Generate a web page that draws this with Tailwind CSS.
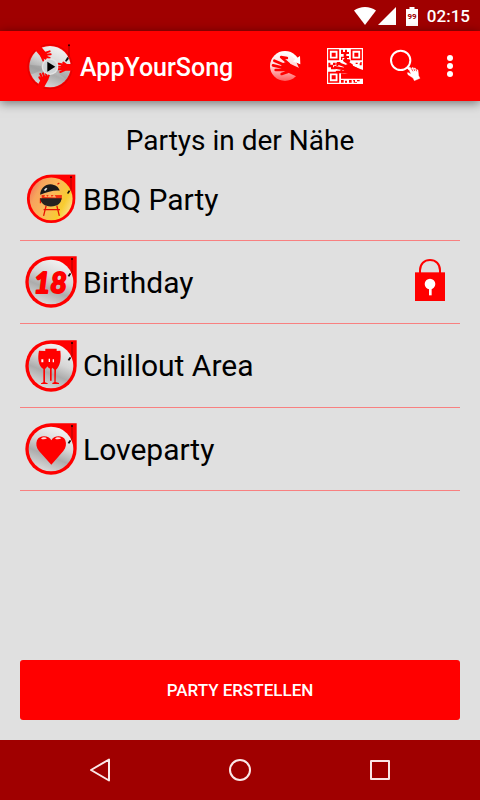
<!DOCTYPE html>
<html lang="de">

<head>
    <meta charset="UTF-8">
    <meta name="viewport" content="width=device-width, initial-scale=1.0">
    <title>AppYourSong</title>
    <script src="https://cdn.jsdelivr.net/npm/@tailwindcss/browser@4"></script>
</head>

<body class="min-h-screen flex flex-col bg-[#e0e0e0] text-black font-['Roboto',sans-serif]">

    <!-- Shared shapes -->
    <svg class="absolute w-0 h-0" aria-hidden="true">
        <defs>
            <linearGradient id="silver" x1="0.7" y1="0" x2="0.3" y2="1">
                <stop offset="0" stop-color="#f4f4f4" />
                <stop offset="0.4" stop-color="#d6d6d6" />
                <stop offset="0.65" stop-color="#acacac" />
                <stop offset="1" stop-color="#dedede" />
            </linearGradient>
            <linearGradient id="fire" x1="0" y1="0.2" x2="1" y2="0.7">
                <stop offset="0" stop-color="#f0705a" />
                <stop offset="0.2" stop-color="#f7a45c" />
                <stop offset="0.5" stop-color="#fbb85a" />
                <stop offset="0.8" stop-color="#f8cc30" />
                <stop offset="1" stop-color="#fbe08a" />
            </linearGradient>
            <linearGradient id="fade" x1="0" y1="0" x2="0" y2="1">
                <stop offset="0" stop-color="#ffffff" />
                <stop offset="0.5" stop-color="#ffd8d8" />
                <stop offset="1" stop-color="#ff5a5a" />
            </linearGradient>
        </defs>
        <symbol id="pin" viewBox="0 0 156 156">
            <path d="M78 1H155V78A77 77 0 1 1 78 1Z" fill="#ff0000" />
        </symbol>
        <symbol id="tonearm" viewBox="0 0 156 156">
            <path d="M141 8V48L132 60" fill="none" stroke="#800000" stroke-width="2" />
            <circle cx="141" cy="9" r="3" fill="#200000" />
            <path d="M128 60L134 51L138 54L133 62Z" fill="#111" />
        </symbol>
    </svg>

    <!-- Status bar -->
    <div class="h-[31px] shrink-0 bg-[#a00000] text-white flex items-center justify-end pt-px pr-[10px]">
        <svg class="w-[22px] h-[18px] mr-[2px]" viewBox="0 0 22 18" fill="#fff">
            <path d="M0 3.6C6-1.2 16-1.2 22 3.6L11 18Z" />
        </svg>
        <svg class="w-[18px] h-[18px] mr-[10px]" viewBox="0 0 18 18" fill="#fff">
            <path d="M18 0V18H0Z" />
        </svg>
        <svg class="w-3 h-[19px] mr-[9px]" viewBox="0 0 12 19">
            <path d="M3.5 0H8.5V2H12V19H0V2H3.5Z" fill="#fff" />
            <text x="6" y="12" text-anchor="middle" font-family="Roboto" font-size="8" font-weight="700" fill="#a00000">99</text>
        </svg>
        <span class="text-[17px] leading-6 font-medium">02:15</span>
    </div>

    <!-- App bar -->
    <header class="h-[70px] shrink-0 bg-[#ff0000] text-white flex items-center pl-[26px] pr-[15px] shadow-[0_2px_10px_rgba(0,0,0,0.5)]">
        <svg class="w-12 h-12 mr-[6px] shrink-0" viewBox="0 0 144 144">
            <circle cx="72" cy="74" r="66" fill="#ff0000" stroke="#e40000" stroke-width="4" />
            <circle cx="72" cy="74" r="62" fill="url(#silver)" />
            <path d="M72 74L10 68A62 62 0 0 0 14 98Z" fill="#8c8c8c" opacity="0.4" />
            <path d="M72 74L120 112A62 62 0 0 0 133 84Z" fill="#8c8c8c" opacity="0.3" />
            <!-- hands -->
            <g fill="none" stroke="#ff0000" stroke-linecap="round">
                <path d="M34 16L54 40" stroke-width="20" />
                <path d="M52 34L71 28M56 38L74 37M58 43L71 48M52 44L66 57M46 42L52 56" stroke-width="6" />
                <path d="M134 76H114" stroke-width="20" />
                <path d="M114 68L98 65M112 74L96 74M112 80L98 82M116 84L103 90M120 68L112 62" stroke-width="6" />
                <path d="M46 130L56 112" stroke-width="20" />
                <path d="M50 112L43 96M56 108L51 94M62 108L60 94M64 112L69 98M48 118L40 106" stroke-width="6" />
            </g>
            <circle cx="72" cy="74" r="25" fill="#e4e4e4" />
            <circle cx="72" cy="74" r="21" fill="#cfd4d6" />
            <path d="M64 59L88 74L64 89Z" fill="#000" />
            <path d="M129 10V42L121 56" fill="none" stroke="#800000" stroke-width="2" />
            <circle cx="129" cy="10" r="3" fill="#300000" />
            <path d="M117 57L124 45L129 50L121 59Z" fill="#111" />
        </svg>
        <h1 class="flex-1 pt-1 text-[25px] leading-8 font-medium whitespace-nowrap">AppYourSong</h1>

        <button class="w-15 h-full flex items-center justify-center" aria-label="Aktualisieren">
            <svg class="w-9 h-9" viewBox="0 0 108 108">
                <circle cx="54" cy="54" r="45" fill="url(#fade)" />
                <path d="M80 25L108 60V108H92L104 78Z" fill="#ff0000" />
                <path d="M70 14C80 17 87 23 91 29L99 24L100 49L77 40L84 35C80 28 74 23 66 20Z" fill="#fff" />
                <g fill="none" stroke="#ff0000" stroke-linecap="round" stroke-linejoin="round">
                    <path d="M56 56L78 66L104 78" stroke-width="27" />
                    <path d="M54 52L22 38M52 60L18 52M56 66L26 66M62 72L44 78" stroke-width="8" />
                    <path d="M66 48L42 27L60 30" stroke-width="7" />
                </g>
            </svg>
        </button>
        <button class="w-15 h-full flex items-center justify-center" aria-label="QR-Code scannen">
            <svg class="w-9 h-9" viewBox="0 0 108 108">
                <path d="M0 0H108V108H0Z" fill="#fff" />
                <g fill="none" stroke="#ff0000" stroke-width="5">
                    <path d="M6 6H34V34H6ZM74 6H102V34H74ZM6 74H34V102H6Z" />
                </g>
                <path d="M14 14H26V26H14ZM82 14H94V26H82ZM14 82H26V94H14Z" fill="#ff0000" />
                <path d="M42 5H48V12H54V5H60V12H66V18H58V24H66V30H60V36H52V30H46V36H42V26H50V18H42ZM4 44H10V50H18V44H26V52H18V58H26V64H12V58H4ZM30 42H40V48H34V54H28V46H30ZM42 96H50V104H42ZM54 98H60V104H54ZM66 96H74V104H66ZM78 96H84V102H90V96H98V100H90V104H80V98H78ZM100 42H104V52H98V46H100ZM40 66H46V72H40ZM86 44H92V48H86Z" fill="#ff0000" />
                <path d="M42 76L78 78L108 86V92H42Z" fill="#ff0000" />
                <g fill="none" stroke="#ff0000" stroke-linecap="round" stroke-linejoin="round">
                    <path d="M64 62L84 72" stroke-width="28" />
                    <path d="M60 56L32 46M58 64L24 58M60 72L30 72M68 78L46 84M74 52L52 37L66 38" stroke-width="8" />
                </g>
                <path d="M76 54L108 66V90L72 86Z" fill="#ff0000" />
            </svg>
        </button>
        <button class="w-15 h-full flex items-center justify-center" aria-label="Suchen">
            <svg class="w-9 h-9" viewBox="0 0 108 108">
                <circle cx="41" cy="37" r="29" fill="none" stroke="#fff" stroke-width="6" />
                <path d="M61 58L68 65" stroke="#fff" stroke-width="6" />
                <path d="M64 60L69 57L76 69L73 61L78 58L81 66L80 60L85 60L88 68L88 64L93 66L95 83L99 91L82 98L78 90L63 80L61 74L65 74L72 79Z" fill="#fff" stroke="#fff" stroke-width="1" />
                <path d="M74 62L78 70M81 62L83 69M87 64L89 70" stroke="#ff0000" stroke-width="2" />
            </svg>
        </button>
        <button class="w-[30px] h-full flex flex-col items-center justify-center gap-[2px]" aria-label="Menü">
            <span class="size-[6px] rounded-full bg-white"></span>
            <span class="size-[6px] rounded-full bg-white"></span>
            <span class="size-[6px] rounded-full bg-white"></span>
        </button>
    </header>

    <!-- Party list -->
    <main class="flex-1 flex flex-col px-5 pt-6 pb-5">
        <h2 class="text-[28px] leading-8 text-center">Partys in der Nähe</h2>

        <ul class="text-[30px] leading-10">
            <li class="border-b border-[#f88080]">
                <button class="w-full h-[83px] flex items-center pl-[5px] pr-[15px] text-left">
                    <svg class="size-[52px] mr-[6px]" viewBox="-5 -4 165 165">
                        <use href="#pin" width="156" height="156" />
                        <circle cx="78" cy="78" r="68" fill="url(#fire)" />
                        <g fill="none" stroke="#e81000" stroke-width="4">
                            <path d="M44 76V92M54 112H106M62 100L54 132M96 100L104 132M98 32L104 28" />
                        </g>
                        <path d="M48 66H112V80H48Z" fill="#f03010" />
                        <path d="M56 72L60 62L66 72L74 60L80 72L88 64L94 74Z" fill="#ffb060" />
                        <path d="M43 65C44 46 58 32 76 32C92 33 102 41 105 52C86 50 66 56 43 65Z" fill="#1a1a1a" />
                        <path d="M55 50L62 43L66 46L59 53Z" fill="#e8e8e8" />
                        <path d="M43 76H111C110 92 98 102 77 102C57 102 45 92 43 76Z" fill="#262220" />
                        <use href="#tonearm" width="156" height="156" />
                    </svg>
                    <span class="flex-1 pt-[2px]">BBQ Party</span>
                </button>
            </li>
            <li class="border-b border-[#f88080]">
                <button class="w-full h-[82px] flex items-center pl-[5px] pr-[15px] text-left">
                    <svg class="size-[52px] mr-[6px]" viewBox="0 0 156 156">
                        <use href="#pin" width="156" height="156" />
                        <circle cx="78" cy="78" r="67" fill="url(#silver)" />
                        <text x="76" y="110" text-anchor="middle" font-family="Lato" font-weight="700" font-style="italic" font-size="86" fill="#ff0000" stroke="#ff0000" stroke-width="6" stroke-linejoin="round">18</text>
                        <use href="#tonearm" width="156" height="156" />
                    </svg>
                    <span class="flex-1 pt-px">Birthday</span>
                    <svg class="w-[30px] h-[42px] mb-1" viewBox="0 0 90 126" role="img" aria-label="Passwortgeschützt">
                        <path d="M15 44V34C15 14 28 3 45 3C62 3 75 14 75 34V44" fill="none" stroke="#ff0000" stroke-width="6" />
                        <path d="M0 40H90V126H0Z" fill="#ff0000" />
                        <circle cx="45" cy="75" r="16" fill="#fff" />
                        <path d="M42 86H50V109H42Z" fill="#fff" />
                    </svg>
                </button>
            </li>
            <li class="border-b border-[#f88080]">
                <button class="w-full h-[83px] flex items-center pl-[5px] pr-[15px] text-left">
                    <svg class="size-[52px] mr-[6px]" viewBox="0 0 156 156">
                        <use href="#pin" width="156" height="156" />
                        <circle cx="78" cy="78" r="67" fill="url(#silver)" />
                        <g fill="#ff0000">
                            <path d="M61 26H95V60C95 76 84 82 80 86V122H75V86C68 82 60 74 60 60Z" />
                            <path d="M42 32L75 34C76 60 72 78 60 87L60 127L68 130V132H48V130L55 127V87C40 78 37 54 42 32Z" />
                            <path d="M78 34L106 32C109 56 106 78 93 89L92 126L102 129V132H82V129L88 126L88 89C76 80 76 58 78 34Z" />
                        </g>
                        <path d="M49 58H55V67H49ZM71 56H75V66H71ZM83 58H87V67H83Z" fill="#fff" />
                        <use href="#tonearm" width="156" height="156" />
                    </svg>
                    <span class="flex-1 pt-px">Chillout Area</span>
                </button>
            </li>
            <li class="border-b border-[#f88080]">
                <button class="w-full h-[82px] flex items-center pl-[5px] pr-[15px] text-left">
                    <svg class="size-[52px] mr-[6px]" viewBox="0 0 156 156">
                        <use href="#pin" width="156" height="156" />
                        <circle cx="78" cy="78" r="67" fill="url(#silver)" />
                        <path d="M79 125L42 84C34 75 32 62 36 52C41 43 48 40 57 40C67 40 75 44 79 52C83 44 91 40 101 40C110 40 117 43 121 52C125 62 123 75 115 84Z" fill="#ff0000" />
                        <path d="M48 47C53 42 61 42 66 46C61 49 54 50 48 47ZM90 47C95 42 103 42 109 46C104 49 96 50 90 47Z" fill="#fff" opacity="0.85" />
                        <use href="#tonearm" width="156" height="156" />
                    </svg>
                    <span class="flex-1 pt-px">Loveparty</span>
                </button>
            </li>
        </ul>

        <button class="mt-auto w-full h-15 rounded-[3px] bg-[#ff0000] text-white text-[17px] leading-6 font-medium">PARTY ERSTELLEN</button>
    </main>

    <!-- Navigation bar -->
    <nav class="h-15 shrink-0 bg-[#a00000] grid grid-cols-3 px-[30px]">
        <button class="flex items-center justify-center" aria-label="Zurück">
            <svg class="size-6" viewBox="0 0 24 24" fill="none" stroke="#fbe8e8" stroke-width="2" stroke-linejoin="round">
                <path d="M3 12L21 1.500V22.500Z" />
            </svg>
        </button>
        <button class="flex items-center justify-center" aria-label="Startseite">
            <svg class="size-6" viewBox="0 0 24 24" fill="none" stroke="#fbe8e8" stroke-width="2">
                <circle cx="12" cy="12" r="10" />
            </svg>
        </button>
        <button class="flex items-center justify-center" aria-label="Übersicht">
            <svg class="size-6" viewBox="0 0 24 24" fill="none" stroke="#fbe8e8" stroke-width="2" stroke-linejoin="round">
                <path d="M3 3H21V21H3Z" />
            </svg>
        </button>
    </nav>
</body>

</html>
